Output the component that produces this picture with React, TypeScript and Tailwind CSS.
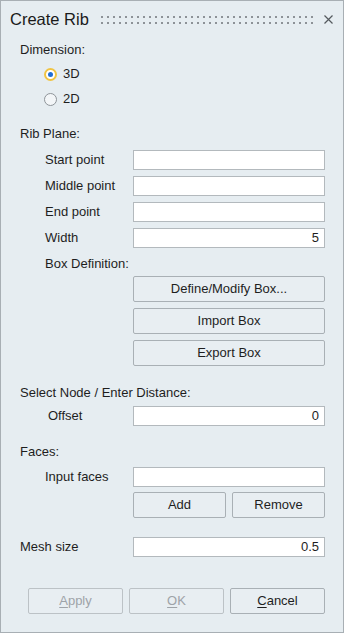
import React from 'react';

const font = { fontFamily: '"Liberation Sans", Arial, sans-serif' };

function Field({ label, value = '', indent = 'pl-[25px]', mt }: { label: string; value?: string; indent?: string; mt: string }) {
  return (
    <div className={`flex items-center h-[20px] ${mt}`}>
      <span className={`w-[113px] ${indent} whitespace-nowrap`}>{label}</span>
      <div className="w-[192px] h-[20px] bg-white border border-[#b3b9bd] flex items-center justify-end pr-[5px]">
        {value}
      </div>
    </div>
  );
}

function Btn({ children, className = '', disabled = false }: { children: React.ReactNode; className?: string; disabled?: boolean }) {
  return (
    <div
      className={`h-[26px] rounded-[2px] border flex items-center justify-center bg-[#e8eef2] ${
        disabled ? 'border-[#bcc2c6] text-[#9ea3a8]' : 'border-[#a9b0b5] text-[#1e1e1e]'
      } ${className}`}
    >
      {children}
    </div>
  );
}

function Radio({ checked, label, mt }: { checked: boolean; label: string; mt: string }) {
  return (
    <div className={`flex items-center h-[16px] pl-[24px] ${mt}`}>
      {checked ? (
        <div className="w-[13px] h-[13px] rounded-full border-2 border-[#f0c443] bg-white flex items-center justify-center">
          <div className="w-[5px] h-[5px] rounded-full bg-[#1f6fd6]" />
        </div>
      ) : (
        <div className="w-[13px] h-[13px] rounded-full border border-[#8e9499] bg-[#f3f6f8]" />
      )}
      <span className="ml-[6px]">{label}</span>
    </div>
  );
}

export default function App() {
  return (
    <div
      style={font}
      className="w-[344px] h-[633px] border border-[#a8afb4] bg-[#e6edf1] text-[13px] leading-[16px] text-[#1e1e1e] flex flex-col"
    >
      {/* Title bar */}
      <div className="h-[36px] flex items-center pl-[9px] pr-[9px]">
        <span className="text-[16.5px] text-[#1a1a1a] whitespace-nowrap">Create Rib</span>
        <div className="flex-1 ml-[12px] mr-[10px] flex flex-col gap-[4px] pt-[1px] overflow-hidden">
          {[0, 1].map((r) => (
            <div key={r} className="flex gap-[4px]">
              {Array.from({ length: 36 }).map((_, i) => (
                <div key={i} className="w-[2px] h-[2px] shrink-0 bg-[#8d9297]" />
              ))}
            </div>
          ))}
        </div>
        <svg width="9" height="9" viewBox="0 0 9 9" className="mr-[1px]">
          <path d="M0.5 0.5 L8.5 8.5 M8.5 0.5 L0.5 8.5" stroke="#555a5e" strokeWidth="1.2" />
        </svg>
      </div>

      <div className="pl-[19px] pr-[18px] flex flex-col">
        <div className="mt-[5px]">Dimension:</div>
        <Radio checked label="3D" mt="mt-[8px]" />
        <Radio checked={false} label="2D" mt="mt-[9px]" />

        <div className="mt-[19px]">Rib Plane:</div>
        <Field label="Start point" mt="mt-[8px]" />
        <Field label="Middle point" mt="mt-[6px]" />
        <Field label="End point" mt="mt-[6px]" />
        <Field label="Width" value="5" mt="mt-[6px]" />

        <div className="mt-[8px] pl-[25px]">Box Definition:</div>
        <div className="flex flex-col items-end gap-[6px] mt-[4px]">
          <Btn className="w-[192px]">Define/Modify Box...</Btn>
          <Btn className="w-[192px]">Import Box</Btn>
          <Btn className="w-[192px]">Export Box</Btn>
        </div>

        <div className="mt-[19px]">Select Node / Enter Distance:</div>
        <Field label="Offset" value="0" indent="pl-[28px]" mt="mt-[5px]" />

        <div className="mt-[18px]">Faces:</div>
        <Field label="Input faces" mt="mt-[7px]" />
        <div className="flex justify-end gap-[6px] mt-[5px]">
          <Btn className="w-[93px]">Add</Btn>
          <Btn className="w-[93px]">Remove</Btn>
        </div>

        <Field label="Mesh size" value="0.5" indent="pl-0" mt="mt-[19px]" />

        <div className="flex justify-end gap-[6px] mt-[31px]">
          <Btn disabled className="w-[95px]">
            <span><u className="underline-offset-2">A</u>pply</span>
          </Btn>
          <Btn disabled className="w-[95px]">
            <span><u className="underline-offset-2">O</u>K</span>
          </Btn>
          <Btn className="w-[95px]">
            <span><u className="underline-offset-2">C</u>ancel</span>
          </Btn>
        </div>
      </div>
    </div>
  );
}
